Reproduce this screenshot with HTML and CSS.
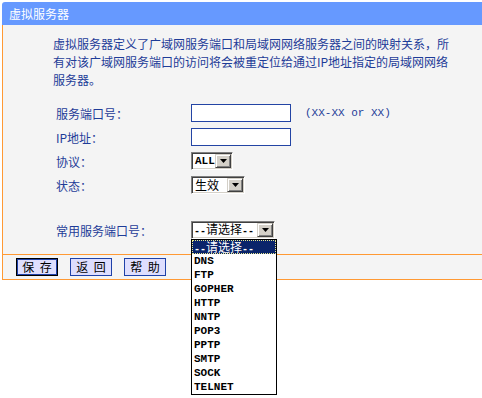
FILE: index.html
```html
<html lang="zh-CN">
<head>
    <meta charset="UTF-8">
    <title>虚拟服务器</title>
    <link rel="stylesheet" href="styles.css">
</head>
<body>
    <div class="box">
        <div class="title">虚拟服务器</div>
        <div class="panel">
            <p class="desc">虚拟服务器定义了广域网服务端口和局域网网络服务器之间的映射关系，所有对该广域网服务端口的访问将会被重定位给通过IP地址指定的局域网网络服务器。</p>

            <div class="form">
                <div class="row">
                    <label class="lbl">服务端口号：</label>
                    <input class="txt" type="text">
                    <span class="hint">(XX-XX or XX)</span>
                </div>
                <div class="row">
                    <label class="lbl">IP地址：</label>
                    <input class="txt" type="text">
                </div>
                <div class="row">
                    <label class="lbl">协议：</label>
                    <div class="sel sel-proto">
                        <span class="val lat">ALL</span>
                        <span class="arrow"><svg width="7" height="4" viewBox="0 0 7 4"><path d="M0 0h7L3.5 4z" fill="#000"/></svg></span>
                    </div>
                </div>
                <div class="row">
                    <label class="lbl">状态：</label>
                    <div class="sel sel-state">
                        <span class="val">生效</span>
                        <span class="arrow"><svg width="7" height="4" viewBox="0 0 7 4"><path d="M0 0h7L3.5 4z" fill="#000"/></svg></span>
                    </div>
                </div>
                <div class="row row-common">
                    <label class="lbl">常用服务端口号：</label>
                    <div class="sel sel-common">
                        <span class="val"><span class="dash">--</span>请选择<span class="dash">--</span></span>
                        <span class="arrow"><svg width="7" height="4" viewBox="0 0 7 4"><path d="M0 0h7L3.5 4z" fill="#000"/></svg></span>
                        <ul class="menu">
                            <li class="on"><span class="dash">--</span>请选择<span class="dash">--</span></li>
                            <li>DNS</li>
                            <li>FTP</li>
                            <li>GOPHER</li>
                            <li>HTTP</li>
                            <li>NNTP</li>
                            <li>POP3</li>
                            <li>PPTP</li>
                            <li>SMTP</li>
                            <li>SOCK</li>
                            <li>TELNET</li>
                        </ul>
                    </div>
                </div>
            </div>

            <div class="bar">
                <button class="btn btn-default">保 存</button>
                <button class="btn">返 回</button>
                <button class="btn">帮 助</button>
            </div>
        </div>
    </div>
</body>
</html>
```

FILE: styles.css
```css
body {
    margin: 0;
    background-color: #fff;
    font-family: "Noto Sans CJK SC", sans-serif;
    font-size: 12px;
}

.box {
    margin: 2px 0 0 2px;
}

.title {
    height: 23px;
    line-height: 23px;
    padding-left: 7px;
    background-color: #6699ff;
    color: #fff;
    border-top-left-radius: 3px;
}

.panel {
    background-color: #f4f4f4;
    border-left: 1px solid #ff9933;
    border-bottom: 1px solid #ff9933;
}

.desc {
    margin: 0;
    padding: 10px 0 0 50px;
    width: 400px;
    line-height: 18px;
    color: #1e3c98;
}

.form {
    margin-top: 12px;
    padding-bottom: 12px;
}

.row {
    display: flex;
    align-items: center;
    height: 24px;
}

.row-common {
    margin-top: 21px;
}

.lbl {
    width: 135px;
    padding-left: 53px;
    color: #1e3c98;
}

.txt {
    width: 100px;
    height: 18px;
    box-sizing: border-box;
    margin: 0;
    border: 1px solid #2344a4;
    background-color: #fff;
}

.hint {
    margin-left: 14px;
    font-family: "Liberation Mono", monospace;
    font-size: 11px;
    color: #1e3c98;
}

.lat {
    font-family: "Liberation Mono", monospace;
    font-size: 11px;
}

.dash {
    font-family: "Liberation Mono", monospace;
    font-size: 10px;
    font-weight: bold;
}

.sel {
    position: relative;
    display: flex;
    align-items: center;
    height: 18px;
    box-sizing: border-box;
    border: 1px solid;
    border-color: #808080 #ffffff #ffffff #808080;
    box-shadow: inset 1px 1px #404040, inset -1px -1px #d4d0c8;
    background-color: #fff;
    padding: 1px;
}

.sel .val {
    flex: 1;
    padding-left: 2px;
    line-height: 14px;
    white-space: nowrap;
    color: #000;
}

.sel .val.lat {
    font-weight: bold;
}

.sel-proto {
    width: 42px;
}

.sel-state {
    width: 54px;
}

.sel-common {
    width: 84px;
}

.sel-common .val {
    padding-left: 1px;
}

.arrow {
    display: flex;
    align-items: center;
    justify-content: center;
    width: 16px;
    height: 14px;
    box-sizing: border-box;
    background-color: #d4d0c8;
    border: 1px solid;
    border-color: #d4d0c8 #404040 #404040 #d4d0c8;
    box-shadow: inset 1px 1px #fff, inset -1px -1px #808080;
}

.menu {
    position: absolute;
    top: 17px;
    left: -1px;
    z-index: 2;
    width: 86px;
    box-sizing: border-box;
    margin: 0;
    padding: 0;
    list-style: none;
    background-color: #fff;
    border: 1px solid #000;
}

.menu li {
    height: 14px;
    line-height: 14px;
    padding-left: 2px;
    white-space: nowrap;
    font-family: "Liberation Mono", monospace;
    font-size: 11px;
    font-weight: bold;
    color: #000;
}

.menu li.on {
    background-color: #0a246a;
    color: #fff;
    font-family: "Noto Sans CJK SC", sans-serif;
    font-size: 12px;
    font-weight: normal;
    outline: 1px dotted #e8e890;
    outline-offset: -1px;
}

.bar {
    display: flex;
    gap: 12px;
    height: 25px;
    padding: 3px 0 0 13px;
    box-sizing: border-box;
    border-top: 1px solid #ff9933;
}

.btn {
    width: 42px;
    height: 18px;
    margin: 0;
    padding: 0;
    border: 1px solid #1f41a8;
    background-color: #dedefe;
    color: #000;
    font-family: "Noto Sans CJK SC", sans-serif;
    font-size: 12px;
    line-height: 16px;
    word-spacing: 3px;
}

.btn-default {
    border-color: #000;
    box-shadow: inset 0 0 0 1px #1f41a8;
}
```
